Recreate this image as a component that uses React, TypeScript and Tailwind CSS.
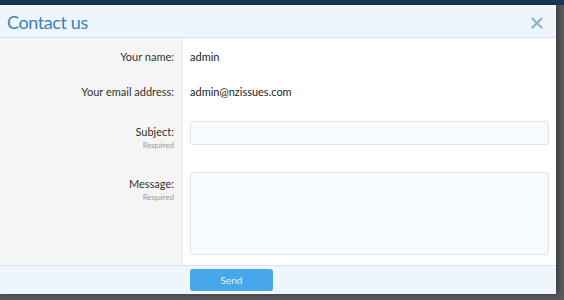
import React from 'react';

const font = { fontFamily: 'Lato, "Open Sans", sans-serif' };

const Row: React.FC<{ label: string; required?: boolean; children: React.ReactNode; h: string; lpt: string; rpt: string }> = ({ label, required, children, h, lpt, rpt }) => (
  <div className={`flex ${h}`}>
    <div className={`w-[183px] shrink-0 bg-[#f5f5f5] border-r border-[#ececec] pr-[8px] text-right ${lpt}`}>
      <div className="text-[11px] leading-[14px] text-[#333]">{label}</div>
      {required && <div className="text-[8px] leading-[12px] text-[#9a9a9a]">Required</div>}
    </div>
    <div className={`flex-1 pl-[7px] pr-[7px] ${rpt}`}>{children}</div>
  </div>
);

const App: React.FC = () => {
  return (
    <div className="w-[564px] h-[300px] bg-[#5a5a5a] overflow-hidden relative" style={font}>
      <div className="h-[5px] bg-[#1b3858]" />
      <div className="w-[556px] h-[289px] bg-white flex flex-col shadow-[2px_0_6px_rgba(0,0,0,0.4)]">
        <div className="h-[33px] shrink-0 bg-[#eef5fc] border-b border-[#d9e3ec] flex items-center justify-between pl-[7px] pr-[13px]">
          <span className="text-[18px] tracking-[-0.4px] text-[#3c82b9] leading-none mt-[2px]">Contact us</span>
          <svg width="12" height="12" viewBox="0 0 12 12" className="mt-[3px]">
            <path d="M1.5 1.5 L10.5 10.5 M10.5 1.5 L1.5 10.5" stroke="#8fb4cf" strokeWidth="2.2" strokeLinecap="round" />
          </svg>
        </div>
        <div className="flex-1 flex flex-col">
          <Row label="Your name:" h="h-[35px]" lpt="pt-[12px]" rpt="pt-[12px]">
            <div className="text-[11px] leading-[14px] text-[#222]">admin</div>
          </Row>
          <Row label="Your email address:" h="h-[35px]" lpt="pt-[12px]" rpt="pt-[12px]">
            <div className="text-[11px] leading-[14px] text-[#222]">admin@nzissues.com</div>
          </Row>
          <Row label="Subject:" required h="h-[52px]" lpt="pt-[17px]" rpt="pt-[13px]">
            <div className="h-[24px] rounded-[3px] border border-[#dde4ea] bg-[#f8fbfd]" />
          </Row>
          <Row label="Message:" required h="flex-1" lpt="pt-[17px]" rpt="pt-[12px]">
            <div className="h-[83px] rounded-[3px] border border-[#dde4ea] bg-[#f8fbfd]" />
          </Row>
        </div>
        <div className="h-[29px] shrink-0 bg-[#eef5fc] border-t border-[#d7e1ea] pl-[190px] pt-[3px]">
          <div className="w-[83px] h-[22px] rounded-[3px] bg-[#47a7ea] flex items-center justify-center text-[10px] text-[#e3f1fc]">
            Send
          </div>
        </div>
      </div>
    </div>
  );
};

export default App;
